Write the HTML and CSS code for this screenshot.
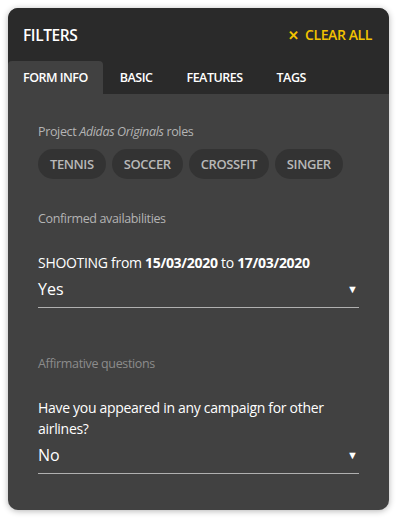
FILE: index.html
```html
<!DOCTYPE html>
<html lang="en">
<head>
    <meta charset="UTF-8">
    <meta name="viewport" content="width=device-width, initial-scale=1.0">
    <title>Filters</title>
    <link rel="stylesheet" href="styles.css">
</head>
<body>
    <div class="panel">
        <div class="panel-head">
            <div class="title-row">
                <h2>FILTERS</h2>
                <a class="clear-all" href="#"><span class="x">&#10005;</span> CLEAR ALL</a>
            </div>
            <div class="tabs">
                <div class="tab active">FORM INFO</div>
                <div class="tab">BASIC</div>
                <div class="tab">FEATURES</div>
                <div class="tab">TAGS</div>
            </div>
        </div>
        <div class="panel-body">
            <div class="label">Project <em>Adidas Originals</em> roles</div>
            <div class="chips">
                <span class="chip">TENNIS</span>
                <span class="chip">SOCCER</span>
                <span class="chip">CROSSFIT</span>
                <span class="chip">SINGER</span>
            </div>

            <div class="label section">Confirmed availabilities</div>
            <div class="question">SHOOTING from <b>15/03/2020</b> to <b>17/03/2020</b></div>
            <div class="select"><span>Yes</span><span class="arrow">&#9660;</span></div>

            <div class="label section dim">Affirmative questions</div>
            <div class="question">Have you appeared in any campaign for other airlines?</div>
            <div class="select"><span>No</span><span class="arrow">&#9660;</span></div>
        </div>
    </div>
</body>
</html>
```

FILE: styles.css
```css
body { margin: 0; background: #fff; font-family: "Open Sans", "Liberation Sans", sans-serif; }
.panel { margin: 8px; width: 381px; height: 502px; border-radius: 10px; overflow: hidden; background: #414141; box-shadow: 0 1px 6px rgba(0, 0, 0, 0.3); display: flex; flex-direction: column; }
.panel-head { background: #2a2a2a; }
.title-row { height: 53px; display: flex; align-items: center; justify-content: space-between; padding: 0 17px 0 15px; }
.title-row h2 { margin: 0; font-size: 15.5px; font-weight: 600; color: #fff; letter-spacing: -0.4px; }
.clear-all { color: #f2c300; text-decoration: none; font-size: 14px; font-weight: 600; letter-spacing: -0.4px; }
.clear-all .x { font-size: 13px; font-weight: 700; margin-right: 3px; }
.tabs { display: flex; height: 33px; }
.tab { padding: 0 17px; display: flex; align-items: center; color: #fff; font-size: 12.5px; font-weight: 600; letter-spacing: -0.5px; border-radius: 4px 4px 0 0; }
.tab.active { background: #414141; padding: 0 15px; }
.panel-body { padding: 29px 30px 0 30px; color: #fff; }
.label { font-size: 12.5px; line-height: 18px; color: #b4b4b4; letter-spacing: -0.35px; }
.label.section { margin-top: 31px; }
.label.dim { margin-top: 47px; color: #8c8c8c; }
.chips { display: flex; gap: 6px; margin-top: 8px; }
.chip { height: 30px; padding: 0 12px; border-radius: 15px; background: #333; color: #b8b8b8; font-size: 13px; font-weight: 600; letter-spacing: -0.4px; display: flex; align-items: center; }
.question { margin-top: 24px; font-size: 14px; line-height: 21px; letter-spacing: -0.3px; }
.select { display: flex; justify-content: space-between; align-items: center; margin-top: 4px; padding-bottom: 6px; border-bottom: 1.5px solid #b0b0b0; font-size: 16px; line-height: 24px; font-weight: 500; }
.select .arrow { font-size: 11px; margin-right: 1px; }
```
